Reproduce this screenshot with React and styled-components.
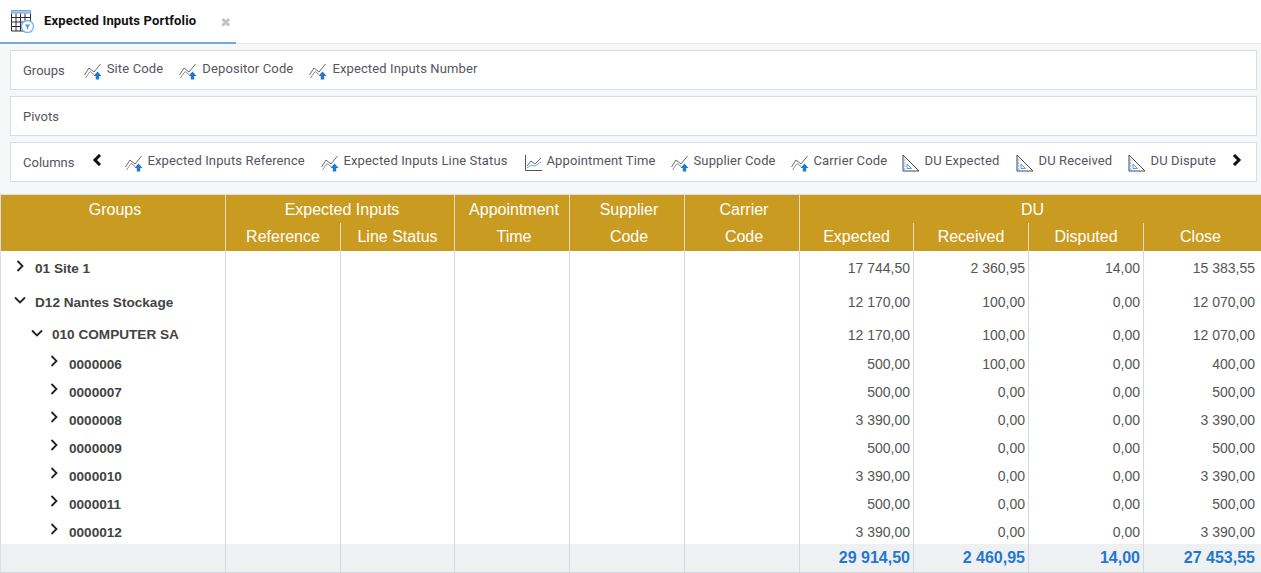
import styled, { createGlobalStyle } from "styled-components";

const COLS = "225px 115px 114px 115px 115px 115px 114px 115px 115px 117px";

const groups = ["Site Code", "Depositor Code", "Expected Inputs Number"];
const columns = [
  { label: "Expected Inputs Reference", icon: "dim", w: 196 },
  { label: "Expected Inputs Line Status", icon: "dim", w: 203 },
  { label: "Appointment Time", icon: "time", w: 147 },
  { label: "Supplier Code", icon: "dim", w: 120 },
  { label: "Carrier Code", icon: "dim", w: 111 },
  { label: "DU Expected", icon: "du", w: 114 },
  { label: "DU Received", icon: "du", w: 112 },
  { label: "DU Dispute", icon: "du", w: 104 },
];

const rows = [
  { label: "01 Site 1", level: 0, open: false, h: 34, v: ["17 744,50", "2 360,95", "14,00", "15 383,55"] },
  { label: "D12 Nantes Stockage", level: 0, open: true, h: 34, v: ["12 170,00", "100,00", "0,00", "12 070,00"] },
  { label: "010 COMPUTER SA", level: 1, open: true, h: 31, v: ["12 170,00", "100,00", "0,00", "12 070,00"] },
  { label: "0000006", level: 2, h: 28, v: ["500,00", "100,00", "0,00", "400,00"] },
  { label: "0000007", level: 2, h: 28, v: ["500,00", "0,00", "0,00", "500,00"] },
  { label: "0000008", level: 2, h: 28, v: ["3 390,00", "0,00", "0,00", "3 390,00"] },
  { label: "0000009", level: 2, h: 28, v: ["500,00", "0,00", "0,00", "500,00"] },
  { label: "0000010", level: 2, h: 28, v: ["3 390,00", "0,00", "0,00", "3 390,00"] },
  { label: "0000011", level: 2, h: 28, v: ["500,00", "0,00", "0,00", "500,00"] },
  { label: "0000012", level: 2, h: 28, v: ["3 390,00", "0,00", "0,00", "3 390,00"] },
];

const totals = ["29 914,50", "2 460,95", "14,00", "27 453,55"];

function GridIcon() {
  return (
    <svg width="25" height="24" viewBox="0 0 25 24" fill="none">
      <rect x="1.5" y="1.5" width="19" height="2.5" fill="#a9c8ef" stroke="#7aa9e6" strokeWidth="1" />
      <path d="M1.5 4.5v17.5h14M20.5 4.5v8M1.5 8.5h19M1.5 13h19M1.5 17.5h19M6 4.5v17.5M10.5 4.5v17.5M15 4.5v17.5" stroke="#2c2c3c" strokeWidth="1" />
      <circle cx="17.5" cy="17.5" r="6" fill="#fff" stroke="#7ab0ee" strokeWidth="1.3" />
      <path d="M14.8 15.5h5.4l-2 2.4v2.4h-1.4v-2.4z" fill="#4f93e0" />
    </svg>
  );
}

function DimIcon() {
  return (
    <svg width="18" height="18" viewBox="0 0 18 18" fill="none">
      <path d="M0.5 13L5 6l5 4 6.5-8" stroke="#6a6a74" strokeWidth="1" />
      <path d="M1.5 16L6 9.5l4 3" stroke="#8f8f98" strokeWidth="1" />
      <path d="M13.5 9.5l4 4.5h-2.3v3.5h-3.4V14H9.5z" fill="#1f78d1" />
    </svg>
  );
}

function TimeIcon() {
  return (
    <svg width="18" height="18" viewBox="0 0 18 18" fill="none">
      <path d="M1.5 1v15.5H18" stroke="#55555f" strokeWidth="1" />
      <path d="M3 12l4-5 4 3 6-6" stroke="#6a6a74" strokeWidth="1" />
      <path d="M3 14l4-3 4 1 6-4" stroke="#6ea6e6" strokeWidth="1" />
    </svg>
  );
}

function DuIcon() {
  return (
    <svg width="18" height="18" viewBox="0 0 18 18" fill="none">
      <path d="M1 1l16 16H1z" stroke="#44444f" strokeWidth="1" />
      <path d="M1.5 6h2M1.5 9h2M1.5 12h2M1.5 15h2" stroke="#5a9ae2" strokeWidth="1" />
      <path d="M5 10l4.5 4.5H5z" stroke="#5a9ae2" strokeWidth="1" />
    </svg>
  );
}

const ICONS = { dim: DimIcon, time: TimeIcon, du: DuIcon };

function Chevron({ open }) {
  return (
    <svg width="12" height="12" viewBox="0 0 12 12" fill="none">
      <path d={open ? "M1 3.5l5 5 5-5" : "M3.5 1l5 5-5 5"} stroke="#222" strokeWidth="1.8" />
    </svg>
  );
}

function Arrow({ left }) {
  return (
    <svg width="10" height="12" viewBox="0 0 10 12" fill="none">
      <path d={left ? "M8 1L3 6l5 5" : "M2 1l5 5-5 5"} stroke="#111" strokeWidth="3" />
    </svg>
  );
}

export default function App() {
  return (
    <Page>
      <GlobalStyle />
      <TabBar>
        <Tab>
          <GridIcon />
          <TabTitle>Expected Inputs Portfolio</TabTitle>
          <TabClose>✖</TabClose>
        </Tab>
      </TabBar>

      <Panels>
        <Panel>
          <PanelLabel>Groups</PanelLabel>
          <Chips $gap={16}>
            {groups.map((g) => (
              <Chip key={g}>
                <DimIcon />
                {g}
              </Chip>
            ))}
          </Chips>
        </Panel>
        <Panel>
          <PanelLabel>Pivots</PanelLabel>
        </Panel>
        <Panel>
          <PanelLabel>Columns</PanelLabel>
          <ArrowSlot $w={33}>
            <Arrow left />
          </ArrowSlot>
          <Chips $gap={0}>
            {columns.map((c) => {
              const Icon = ICONS[c.icon];
              return (
                <Chip key={c.label} $w={c.w}>
                  <Icon />
                  {c.label}
                </Chip>
              );
            })}
          </Chips>
          <ArrowSlot $w={12}>
            <Arrow />
          </ArrowSlot>
        </Panel>
      </Panels>

      <Table>
        <HeadGrid>
          <HeadCell $rows={2} $top>Groups</HeadCell>
          <HeadCell $cols={2} $top>Expected Inputs</HeadCell>
          <HeadCell $rows={2} $top>Appointment<br />Time</HeadCell>
          <HeadCell $rows={2} $top>Supplier<br />Code</HeadCell>
          <HeadCell $rows={2} $top>Carrier<br />Code</HeadCell>
          <HeadCell $cols={4} $last $top>DU</HeadCell>
          <HeadCell>Reference</HeadCell>
          <HeadCell>Line Status</HeadCell>
          <HeadCell>Expected</HeadCell>
          <HeadCell>Received</HeadCell>
          <HeadCell>Disputed</HeadCell>
          <HeadCell $last>Close</HeadCell>
        </HeadGrid>

        <Body>
          {rows.map((r) => (
            <Row key={r.label} $h={r.h}>
              <TreeCell $level={r.level}>
                <Chevron open={r.open} />
                <TreeLabel>{r.label}</TreeLabel>
              </TreeCell>
              {[0, 1, 2, 3, 4].map((i) => (
                <Cell key={i} />
              ))}
              {r.v.map((val, i) => (
                <Cell key={i} $last={i === 3}>{val}</Cell>
              ))}
            </Row>
          ))}
        </Body>

        <Footer>
          {[0, 1, 2, 3, 4, 5].map((i) => (
            <Cell key={i} />
          ))}
          {totals.map((t, i) => (
            <TotalCell key={t} $last={i === 3}>{t}</TotalCell>
          ))}
        </Footer>
      </Table>
    </Page>
  );
}

const GlobalStyle = createGlobalStyle`
  html, body {
    margin: 0;
    height: 100%;
    overflow: hidden;
  }
  * {
    box-sizing: border-box;
  }
`;

const Page = styled.div`
  width: 1261px;
  height: 573px;
  background: #f6f7f8;
  font-family: Roboto, "Liberation Sans", sans-serif;
  overflow: hidden;
`;

const TabBar = styled.div`
  height: 44px;
  background: #fff;
  border-bottom: 1px solid #e6e8eb;
`;

const Tab = styled.div`
  width: 236px;
  height: 44px;
  padding: 9px 0 0 10px;
  display: flex;
  align-items: flex-start;
  border-bottom: 2px solid #76a8e8;
`;

const TabTitle = styled.span`
  margin: 4px 0 0 9px;
  font-size: 13px;
  font-weight: 700;
  line-height: 16px;
  letter-spacing: 0.16px;
  color: #111;
  white-space: nowrap;
`;

const TabClose = styled.span`
  margin: 6px 0 0 24px;
  font-family: "DejaVu Sans", sans-serif;
  font-size: 13px;
  line-height: 16px;
  color: #c4c4c4;
`;

const Panels = styled.div`
  padding: 6px 4px 0 10px;
  display: flex;
  flex-direction: column;
  gap: 6px;
`;

const Panel = styled.div`
  height: 40px;
  padding-left: 12px;
  display: flex;
  align-items: center;
  background: #fff;
  border: 1px solid #d9dee6;
`;

const PanelLabel = styled.span`
  font-size: 13px;
  color: #555560;
  margin-top: 1px;
`;

const Chips = styled.div`
  display: flex;
  align-items: center;
  gap: ${(p) => p.$gap}px;
  margin-left: ${(p) => (p.$gap ? 19 : 0)}px;
`;

const Chip = styled.span`
  width: ${(p) => (p.$w ? `${p.$w}px` : "auto")};
  display: flex;
  align-items: center;
  gap: 5px;
  font-size: 13px;
  letter-spacing: 0.13px;
  color: #555560;
  white-space: nowrap;
  margin-top: -3px;

  svg {
    margin-top: 4px;
    flex: none;
  }
`;

const ArrowSlot = styled.span`
  width: ${(p) => p.$w}px;
  margin-left: 17px;
  display: flex;
  margin-top: -5px;
  flex: none;

  &:last-child {
    margin-left: 0;
  }
`;

const Table = styled.div`
  margin-top: 12px;
  border-top: 1px solid #d9dee6;
  border-left: 1px solid #d9dee6;
  background: #fff;
  height: 379px;
  display: flex;
  flex-direction: column;
`;

const HeadGrid = styled.div`
  display: grid;
  grid-template-columns: ${COLS};
  grid-template-rows: 28px 28px;
  background: #c99b20;
  font-family: "Liberation Sans", Arial, sans-serif;
  font-size: 16px;
  color: #fff;
`;

const HeadCell = styled.div`
  grid-column: span ${(p) => p.$cols || 1};
  grid-row: span ${(p) => p.$rows || 1};
  padding-left: ${(p) => (p.$top ? 4 : 0)}px;
  padding-top: ${(p) => (p.$top ? 1 : 0)}px;
  padding-right: ${(p) => (p.$last && !p.$top ? 4 : 0)}px;
  line-height: 27px;
  text-align: center;
  white-space: nowrap;
  border-right: ${(p) => (p.$last ? "none" : "1px solid #e6dcc0")};
`;

const Body = styled.div`
  height: 293px;
  overflow: hidden;
  flex: none;
`;

const Row = styled.div`
  display: grid;
  grid-template-columns: ${COLS};
  height: ${(p) => p.$h}px;
  font-family: "Liberation Sans", Arial, sans-serif;
  font-size: 14px;
  color: #555;
`;

const Cell = styled.div`
  height: 100%;
  padding-right: ${(p) => (p.$last ? 6 : 3)}px;
  display: flex;
  align-items: center;
  justify-content: flex-end;
  white-space: nowrap;
  border-right: ${(p) => (p.$last ? "none" : "1px solid #d5d8e0")};
`;

const TreeCell = styled.div`
  height: 100%;
  padding-left: ${(p) => 13 + p.$level * 17}px;
  display: flex;
  align-items: center;
  gap: 9px;
  border-right: 1px solid #d5d8e0;

  svg {
    margin-top: ${(p) => (p.$level === 2 ? -6 : -4)}px;
    flex: none;
  }
`;

const TreeLabel = styled.span`
  font-size: 13.6px;
  font-weight: 700;
  color: #444;
  white-space: nowrap;
`;

const Footer = styled.div`
  display: grid;
  grid-template-columns: ${COLS};
  height: 29px;
  background: #eff0f2;
  border-bottom: 1px solid #d5d8e0;
  font-family: "Liberation Sans", Arial, sans-serif;
`;

const TotalCell = styled(Cell)`
  font-size: 16px;
  font-weight: 700;
  color: #1f78d1;
`;
